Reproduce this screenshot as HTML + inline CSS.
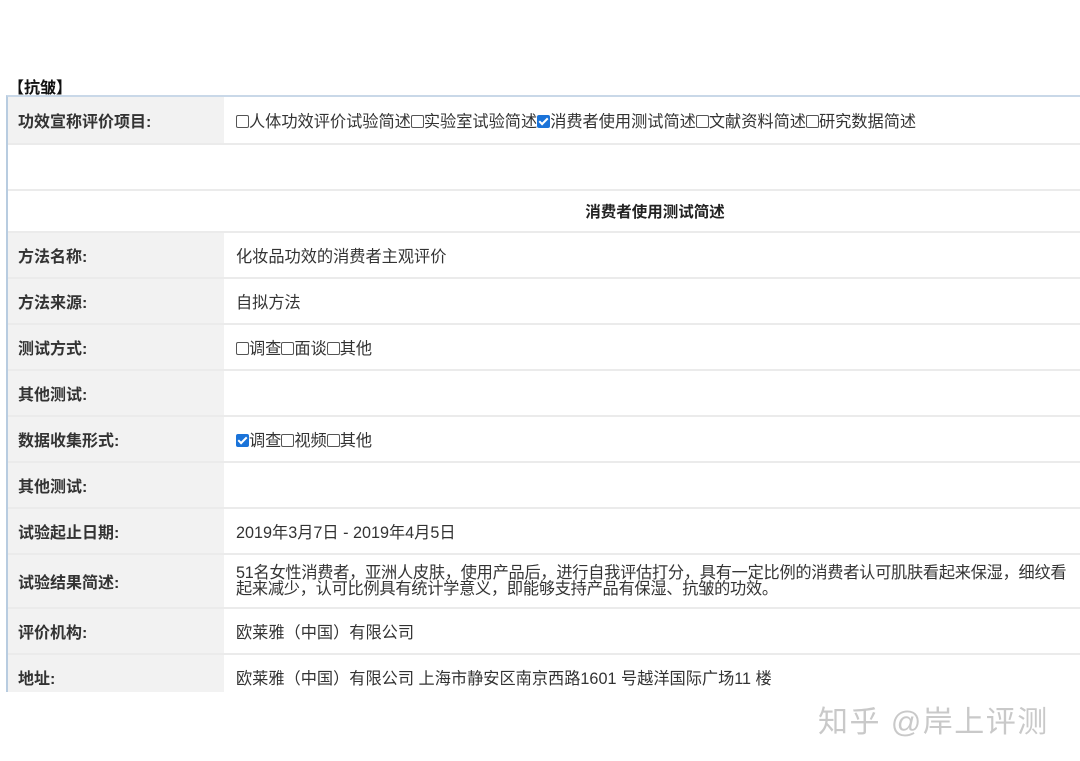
<!DOCTYPE html>
<html><head><meta charset="utf-8"><style>
body{margin:0;width:1080px;height:761px;background:#fff;overflow:hidden;font-family:"Liberation Sans","Noto Sans CJK SC",sans-serif;color:#333;position:relative}
.t{position:absolute;left:8px;top:74px;font-size:16px;font-weight:bold;color:#111}
.tbl{position:absolute;left:6px;top:95px;width:1074px;height:595px;border-left:2px solid #b8cce0;border-top:2px solid #c9d8e8;overflow:hidden}
.r{position:absolute;left:0;width:1074px;border-bottom:2px solid #ebebeb;box-sizing:border-box}
.l{position:absolute;left:0;top:0;bottom:0;width:216px;background:#f2f2f2;font-weight:bold;font-size:16px;display:flex;align-items:center;padding-left:10px;box-sizing:border-box}
.v{position:absolute;left:228px;top:0;bottom:0;right:0;font-size:16.2px;display:flex;align-items:center;color:#333}
.cb{display:inline-block;width:11px;height:11px;border:1px solid #555;border-radius:2px;vertical-align:-1px;background:#fff}
.cb.c{background:#1a73d9;border-color:#1a73d9;position:relative}
.cb.c:after{content:"";position:absolute;left:3px;top:0px;width:3px;height:7px;border:solid #fff;border-width:0 2px 2px 0;transform:rotate(45deg)}
.wm{position:absolute;left:818px;top:697px;font-size:30px;color:#c9c9c9;letter-spacing:1.5px}
</style></head><body>
<div class="t">【抗皱】</div>
<div class="tbl">
<div class="r" style="top:0;height:48px"><div class="l">功效宣称评价项目:</div><div class="v"><span><span class="cb"></span>人体功效评价试验简述<span class="cb"></span>实验室试验简述<span class="cb c"></span>消费者使用测试简述<span class="cb"></span>文献资料简述<span class="cb"></span>研究数据简述</span></div></div>
<div class="r" style="top:48px;height:46px"></div>
<div class="r" style="top:94px;height:42px"><div class="v" style="left:0;justify-content:center;font-weight:bold;color:#222;padding-left:220px;font-size:15.5px">消费者使用测试简述</div></div>
<div class="r" style="top:136px;height:46px"><div class="l">方法名称:</div><div class="v">化妆品功效的消费者主观评价</div></div>
<div class="r" style="top:182px;height:46px"><div class="l">方法来源:</div><div class="v">自拟方法</div></div>
<div class="r" style="top:228px;height:46px"><div class="l">测试方式:</div><div class="v"><span><span class="cb"></span>调查<span class="cb"></span>面谈<span class="cb"></span>其他</span></div></div>
<div class="r" style="top:274px;height:46px"><div class="l">其他测试:</div><div class="v"></div></div>
<div class="r" style="top:320px;height:46px"><div class="l">数据收集形式:</div><div class="v"><span><span class="cb c"></span>调查<span class="cb"></span>视频<span class="cb"></span>其他</span></div></div>
<div class="r" style="top:366px;height:46px"><div class="l">其他测试:</div><div class="v"></div></div>
<div class="r" style="top:412px;height:46px"><div class="l">试验起止日期:</div><div class="v">2019年3月7日 - 2019年4月5日</div></div>
<div class="r" style="top:458px;height:54px"><div class="l">试验结果简述:</div><div class="v" style="line-height:16px;letter-spacing:-0.25px;padding-right:0">51名女性消费者，亚洲人皮肤，使用产品后，进行自我评估打分，具有一定比例的消费者认可肌肤看起来保湿，细纹看起来减少，认可比例具有统计学意义，即能够支持产品有保湿、抗皱的功效。</div></div>
<div class="r" style="top:512px;height:46px"><div class="l">评价机构:</div><div class="v">欧莱雅（中国）有限公司</div></div>
<div class="r" style="top:558px;height:46px"><div class="l">地址:</div><div class="v">欧莱雅（中国）有限公司 上海市静安区南京西路1601 号越洋国际广场11 楼</div></div>
</div>
<div class="wm">知乎 @岸上评测</div>
</body></html>
